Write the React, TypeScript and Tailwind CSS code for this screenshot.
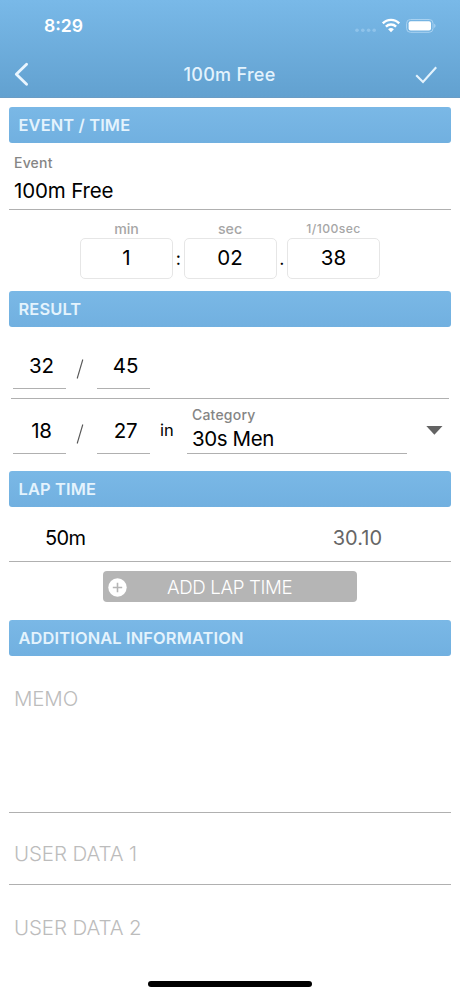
import { useState } from 'react';

type TimeFieldProps = {
  label: string;
  labelClass: string;
  value: string;
  onChange: (value: string) => void;
};

function SectionTitle({ children }: { children: string }) {
  return (
    <h2 className="mx-[9px] h-[35.5px] rounded-[3px] bg-linear-to-b from-[#7ab8e6] to-[#71b0e0] pl-[9.5px] text-[16.4px] leading-9 font-semibold tracking-[0.15px] text-[#e4f3fd]">
      {children}
    </h2>
  );
}

function TimeField({ label, labelClass, value, onChange }: TimeFieldProps) {
  return (
    <label className="block w-[93px]">
      <span className={`block h-[18px] text-center leading-[18px] font-medium text-[#a6a6a6] ${labelClass}`}>
        {label}
      </span>
      <input
        className="block h-[41px] w-full rounded-[5px] border border-[#e6e6e6] pb-[2px] text-center text-[20.5px]"
        value={value}
        onChange={(e) => onChange(e.target.value)}
      />
    </label>
  );
}

function RankField({ value }: { value: string }) {
  return (
    <input
      className="block h-[47px] w-[53px] border-b border-[#b0b0b0] pl-1 text-center text-[20.5px] tracking-[-0.2px]"
      defaultValue={value}
    />
  );
}

function Slash() {
  return (
    <svg className="mt-[17px] ml-[10px] mr-[13px] shrink-0" width="8" height="20" viewBox="0 0 8 20">
      <path d="M6.8 0.5 L1.2 19.5" stroke="#555" strokeWidth="1.1" fill="none" />
    </svg>
  );
}

function StatusIcons() {
  return (
    <div className="flex items-center">
      <svg width="82" height="16" viewBox="0 0 82 16" fill="none">
        {/* No signal dots */}
        <g fill="#8fc3ea">
          <circle cx="2" cy="12.3" r="1.8" />
          <circle cx="7.8" cy="12.3" r="1.8" />
          <circle cx="13.6" cy="12.3" r="1.8" />
          <circle cx="19.2" cy="12.3" r="1.8" />
        </g>
        {/* Wifi */}
        <g stroke="#fff" strokeWidth="2.4">
          <path d="M27.8 5.4 A11.2 11.2 0 0 1 44.2 5.4" />
          <path d="M30.9 8.6 A7.2 7.2 0 0 1 41.1 8.6" />
        </g>
        <path d="M36 14.3 L33.1 11.3 A4.2 4.2 0 0 1 38.9 11.3 Z" fill="#fff" />
        {/* Battery */}
        <rect x="51.6" y="1.5" width="26.4" height="12.8" rx="3.8" stroke="#a9d2f1" strokeWidth="1" />
        <rect x="53.6" y="3.3" width="22.4" height="9.2" rx="2" fill="#fff" />
        <path d="M79.2 5.8 C81 6.5 81 9.2 79.2 9.9 Z" fill="#a9d2f1" />
      </svg>
    </div>
  );
}

export default function App() {
  const [min, setMin] = useState('1');
  const [sec, setSec] = useState('02');
  const [hundredths, setHundredths] = useState('38');

  return (
    <div className="flex h-[996px] w-[460px] flex-col overflow-hidden bg-white font-['Inter',sans-serif] text-black">
      {/* Header */}
      <header className="h-[98px] shrink-0 border-b border-[#6a9cc4] bg-linear-to-b from-[#79b9e8] to-[#62a1d0] pt-[13px]">
        <div className="flex h-[25px] items-center justify-between pr-[23px] pl-[44px]">
          <span className="text-[17.6px] leading-[25px] font-semibold text-white">8:29</span>
          <StatusIcons />
        </div>
        <div className="mt-[21px] flex h-[30px] items-center justify-between pr-[22px] pl-[14px]">
          <button className="w-[30px]" aria-label="Back">
            <svg width="16" height="26" viewBox="0 0 16 26" fill="none">
              <path d="M12.6 3.2 L2.3 13.2 L12.6 23.2" stroke="#eaf6ff" strokeWidth="2.8" strokeLinecap="round" strokeLinejoin="round" />
            </svg>
          </button>
          <h1 className="pt-px text-[18px] leading-[30px] font-medium tracking-[0.3px] text-[#e4f3fd]">100m Free</h1>
          <button className="w-[23px]" aria-label="Save">
            <svg width="23" height="20" viewBox="0 0 23 20" fill="none">
              <path d="M1.2 11.2 L8 18 L21.2 3.2" stroke="#e4f3fd" strokeWidth="2.1" />
            </svg>
          </button>
        </div>
      </header>

      {/* Event / Time */}
      <section className="pt-[9px]">
        <SectionTitle>EVENT / TIME</SectionTitle>
        <div className="mx-[9px] h-[67.5px] border-b border-[#b0b0b0] pt-[11.5px] pl-[5px]">
          <div className="text-[14px] leading-[18px] font-medium tracking-[0.2px] text-[#858585]">Event</div>
          <div className="mt-[5px] text-[20.5px] leading-[28px] tracking-[-0.15px]">100m Free</div>
        </div>
        <div className="flex justify-center pt-[10px]">
          <TimeField label="min" labelClass="text-[14.2px]" value={min} onChange={setMin} />
          <span className="w-[10.5px] pt-[27px] text-center text-[18px] leading-6">:</span>
          <TimeField label="sec" labelClass="text-[14.2px]" value={sec} onChange={setSec} />
          <span className="w-[10.5px] pt-[27px] text-center text-[18px] leading-6">.</span>
          <TimeField label="1/100sec" labelClass="text-[12.2px] tracking-[0.4px]" value={hundredths} onChange={setHundredths} />
        </div>
      </section>

      {/* Result */}
      <section className="pt-[12px]">
        <SectionTitle>RESULT</SectionTitle>
        <div className="mr-[11px] ml-[11px] flex h-[72.5px] border-b border-[#b0b0b0] pt-[15.5px] pl-[2px]">
          <RankField value="32" />
          <Slash />
          <RankField value="45" />
        </div>
        <div className="ml-[13px] flex h-[55px] pt-[8px]">
          <RankField value="18" />
          <Slash />
          <RankField value="27" />
          <span className="ml-[10px] w-[27px] pt-[11px] text-[16.5px] leading-6">in</span>
          <div className="h-[47px] w-[220px] border-b border-[#b0b0b0] pl-[5px]">
            <div className="text-[14px] leading-[16px] font-medium tracking-[0.2px] text-[#858585]">Category</div>
            <div className="text-[20.5px] leading-[32px] tracking-[-0.4px]">30s Men</div>
          </div>
          <svg className="mt-[19px] ml-[19px]" width="17" height="9" viewBox="0 0 17 9">
            <path d="M0.3 0 H16.5 L8.4 8.7 Z" fill="#636363" />
          </svg>
        </div>
      </section>

      {/* Lap time */}
      <section className="pt-[17px]">
        <SectionTitle>LAP TIME</SectionTitle>
        <div className="mx-[9px] flex h-[55.5px] justify-between border-b border-[#b0b0b0] pt-[3.5px] pr-[69px] pl-[36px] text-[20px] leading-[56px]">
          <span className="tracking-[-0.6px]">50m</span>
          <span className="text-[#666]">30.10</span>
        </div>
        <button className="mx-auto mt-[9px] flex h-[31px] w-[254px] items-center rounded-[4px] bg-[#b5b5b5] pl-[5px] text-white">
          <svg className="mt-px" width="19" height="19" viewBox="0 0 19 19">
            <circle cx="9.5" cy="9.5" r="9.2" fill="#fff" />
            <path d="M9.5 4.8 V14.2 M4.8 9.5 H14.2" stroke="#b5b5b5" strokeWidth="1.6" />
          </svg>
          <span className="ml-[40px] pt-[2px] text-[18.7px] leading-[31px] font-light tracking-[-0.35px]">ADD LAP TIME</span>
        </button>
      </section>

      {/* Additional information */}
      <section className="pt-[18px]">
        <SectionTitle>ADDITIONAL INFORMATION</SectionTitle>
        <textarea
          className="mx-[9px] block h-[157.5px] w-[442px] resize-none border-b border-[#b0b0b0] pt-[29.5px] pl-[5px] text-[20.5px] leading-[28px] font-light tracking-[-0.15px] placeholder:text-[#bcbcbc]"
          placeholder="MEMO"
        />
        <input
          className="mx-[9px] block h-[72px] w-[442px] border-b border-[#b0b0b0] pt-[10px] pl-[5px] text-[20.5px] font-light tracking-[-0.1px] placeholder:text-[#bcbcbc]"
          placeholder="USER DATA 1"
        />
        <input
          className="mx-[9px] block h-[72px] w-[442px] pt-[13px] pl-[5px] text-[20.5px] font-light tracking-[-0.1px] placeholder:text-[#bcbcbc]"
          placeholder="USER DATA 2"
        />
      </section>

      {/* Home indicator */}
      <div className="mx-auto mt-auto mb-[9px] h-[6px] w-[164px] shrink-0 rounded-full bg-black" />
    </div>
  );
}
